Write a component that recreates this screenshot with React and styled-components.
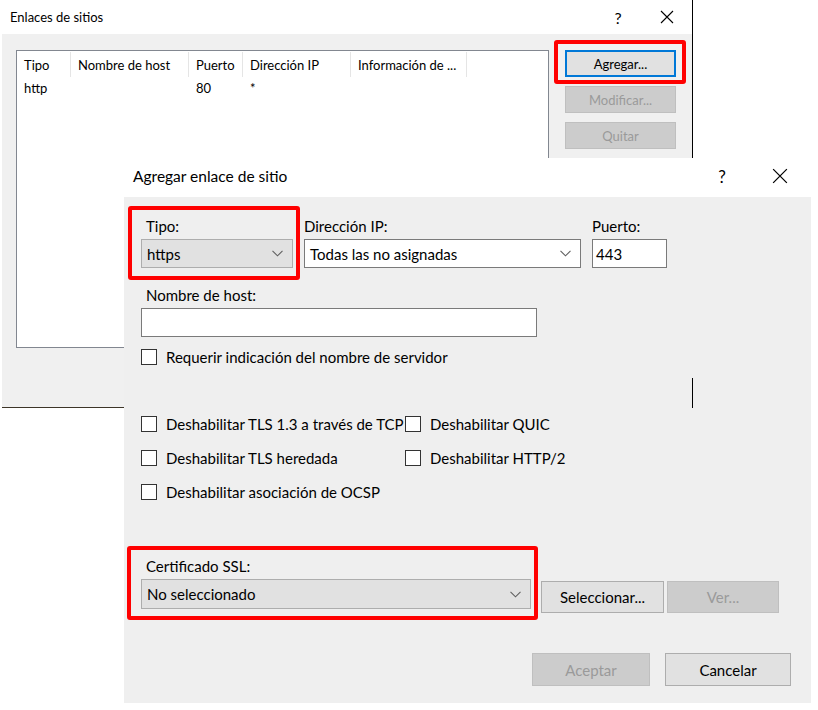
import React from 'react'
import styled, { createGlobalStyle, css } from 'styled-components'

const GlobalStyle = createGlobalStyle`
  html, body {
    margin: 0;
    padding: 0;
    background: #ffffff;
  }

  body {
    font-family: Lato, "Noto Sans", sans-serif;
    color: #000000;
  }
`

const CloseIcon = ({ size = 14 }) => (
  <svg width={size} height={size} viewBox="0 0 14 14">
    <path d="M1 1 L13 13 M13 1 L1 13" stroke="#000" strokeWidth="1.1" fill="none" />
  </svg>
)

const Chevron = () => (
  <svg width="11" height="7" viewBox="0 0 11 7">
    <path d="M0.5 0.8 L5.5 5.8 L10.5 0.8" stroke="#606060" strokeWidth="1.1" fill="none" />
  </svg>
)

const columns = [
  { title: 'Tipo', width: 54 },
  { title: 'Nombre de host', width: 118 },
  { title: 'Puerto', width: 54 },
  { title: 'Dirección IP', width: 108 },
  { title: 'Información de ...', width: 116 },
]

const rows = [['http', '', '80', '*', '']]

const App = () => {
  return (
    <Desktop>
      <GlobalStyle />

      <BackWindow>
        <TitleBar height={34}>
          <WindowTitle size={13} indent={8}>
            Enlaces de sitios
          </WindowTitle>
          <TitleControls gap={3} right={2}>
            <HelpButton size={16}>?</HelpButton>
            <CloseButton>
              <CloseIcon size={14} />
            </CloseButton>
          </TitleControls>
        </TitleBar>

        <BackBody>
          <ListView>
            <HeaderRow>
              {columns.map((c) => (
                <HeaderCell key={c.title} width={c.width}>
                  {c.title}
                </HeaderCell>
              ))}
            </HeaderRow>
            {rows.map((r, i) => (
              <DataRow key={i}>
                {r.map((value, j) => (
                  <DataCell key={j} width={columns[j].width}>
                    {value}
                  </DataCell>
                ))}
              </DataRow>
            ))}
          </ListView>

          <ButtonColumn>
            <Highlight top={10} right={10} bottom={7} left={11}>
              <WinButton width={111} height={27} size={13} focused>
                Agregar...
              </WinButton>
            </Highlight>
            <WinButton width={111} height={27} size={13} disabled>
              Modificar...
            </WinButton>
            <WinButton width={111} height={27} size={13} disabled>
              Quitar
            </WinButton>
            <WinButton width={111} height={27} size={13}>
              Examinar
            </WinButton>
          </ButtonColumn>
        </BackBody>
      </BackWindow>

      <FrontWindow>
        <TitleBar height={39} lift={3}>
          <WindowTitle size={15.5} indent={9}>
            Agregar enlace de sitio
          </WindowTitle>
          <TitleControls gap={12} right={8}>
            <HelpButton size={17}>?</HelpButton>
            <CloseButton>
              <CloseIcon size={16} />
            </CloseButton>
          </TitleControls>
        </TitleBar>

        <FrontBody>
          <FieldRow>
            <Highlight top={10} right={7} bottom={12} left={13}>
              <Field width={152}>
                <FieldLabel indent>Tipo:</FieldLabel>
                <ComboBox>
                  <span>https</span>
                  <Chevron />
                </ComboBox>
              </Field>
            </Highlight>
            <Field width={277}>
              <FieldLabel>Dirección IP:</FieldLabel>
              <ComboBox white>
                <span>Todas las no asignadas</span>
                <Chevron />
              </ComboBox>
            </Field>
            <Field width={75}>
              <FieldLabel>Puerto:</FieldLabel>
              <TextBox>443</TextBox>
            </Field>
          </FieldRow>

          <HostField width={396}>
            <FieldLabel indent>Nombre de host:</FieldLabel>
            <TextBox />
          </HostField>

          <SniRow>
            <CheckBox />
            <CheckText>Requerir indicación del nombre de servidor</CheckText>
          </SniRow>

          <CheckGrid>
            <CheckRow>
              <CheckBox />
              <CheckText>Deshabilitar TLS 1.3 a través de TCP</CheckText>
            </CheckRow>
            <CheckRow>
              <CheckBox />
              <CheckText>Deshabilitar QUIC</CheckText>
            </CheckRow>
            <CheckRow>
              <CheckBox />
              <CheckText>Deshabilitar TLS heredada</CheckText>
            </CheckRow>
            <CheckRow>
              <CheckBox />
              <CheckText>Deshabilitar HTTP/2</CheckText>
            </CheckRow>
            <CheckRow>
              <CheckBox />
              <CheckText>Deshabilitar asociación de OCSP</CheckText>
            </CheckRow>
          </CheckGrid>

          <CertRow>
            <Highlight top={10} right={7} bottom={11} left={14}>
              <Field width={390}>
                <FieldLabel indent>Certificado SSL:</FieldLabel>
                <ComboBox tall>
                  <span>No seleccionado</span>
                  <Chevron />
                </ComboBox>
              </Field>
            </Highlight>
            <CertButtons>
              <WinButton width={123} height={32} size={15}>
                Seleccionar...
              </WinButton>
              <WinButton width={112} height={32} size={15} disabled>
                Ver...
              </WinButton>
            </CertButtons>
          </CertRow>

          <Footer>
            <WinButton width={118} height={33} size={15} disabled>
              Aceptar
            </WinButton>
            <WinButton width={126} height={33} size={15}>
              Cancelar
            </WinButton>
          </Footer>
        </FrontBody>
      </FrontWindow>

      <SeamLine />
    </Desktop>
  )
}

const Desktop = styled.div`
  position: relative;
  width: 818px;
  height: 710px;
  overflow: hidden;
  background: #ffffff;
`

const BackWindow = styled.div`
  position: absolute;
  left: 2px;
  top: 0;
  width: 690px;
  height: 407px;
  display: flex;
  flex-direction: column;
  background: #f0f0f0;
  border-right: 1px solid #000000;
  border-bottom: 1px solid #3d3528;
`

const FrontWindow = styled.div`
  position: absolute;
  left: 124px;
  top: 158px;
  width: 687px;
  height: 545px;
  display: flex;
  flex-direction: column;
  background: #efefef;
`

const SeamLine = styled.div`
  position: absolute;
  left: 692px;
  top: 378px;
  width: 1px;
  height: 30px;
  background: #000000;
`

const TitleBar = styled.div`
  display: flex;
  align-items: center;
  flex: none;
  box-sizing: border-box;
  height: ${({ height }) => height}px;
  padding-bottom: ${({ lift }) => lift || 0}px;
  background: #ffffff;
`

const WindowTitle = styled.div`
  flex: 1;
  padding-left: ${({ indent }) => indent}px;
  font-size: ${({ size }) => size}px;
`

const TitleControls = styled.div`
  display: flex;
  align-items: center;
  gap: ${({ gap }) => gap}px;
  margin-right: ${({ right }) => right}px;
`

const HelpButton = styled.div`
  width: 46px;
  text-align: center;
  font-size: ${({ size }) => size}px;
`

const CloseButton = styled.div`
  width: 46px;
  display: flex;
  justify-content: center;
  align-items: center;
`

const BackBody = styled.div`
  display: flex;
  align-items: flex-start;
  gap: 16px;
  padding: 16px 0 0 14px;
`

const ListView = styled.div`
  width: 531px;
  height: 296px;
  background: #ffffff;
  border: 1px solid #828790;
  font-size: 13px;
`

const HeaderRow = styled.div`
  display: flex;
  height: 25px;
  margin-top: 1px;
`

const HeaderCell = styled.div`
  box-sizing: border-box;
  width: ${({ width }) => width}px;
  padding-left: 7px;
  display: flex;
  align-items: center;
  border-right: 1px solid #e5e5e5;
  white-space: nowrap;
`

const DataRow = styled.div`
  display: flex;
  height: 22px;
  align-items: center;
`

const DataCell = styled.div`
  box-sizing: border-box;
  width: ${({ width }) => width}px;
  padding-left: 7px;
`

const ButtonColumn = styled.div`
  display: flex;
  flex-direction: column;
  gap: 9px;
`

const Highlight = styled.div`
  position: relative;

  &::after {
    content: '';
    position: absolute;
    top: -${({ top }) => top}px;
    right: -${({ right }) => right}px;
    bottom: -${({ bottom }) => bottom}px;
    left: -${({ left }) => left}px;
    border: 4px solid #ff0000;
    border-radius: 3px;
    pointer-events: none;
  }
`

const WinButton = styled.div`
  box-sizing: border-box;
  width: ${({ width }) => width}px;
  height: ${({ height }) => height}px;
  display: flex;
  align-items: center;
  justify-content: center;
  font-size: ${({ size }) => size}px;
  background: #e1e1e1;
  border: 1px solid #adadad;
  color: #000000;

  ${({ focused }) =>
    focused &&
    css`
      border: 2px solid #0078d7;
    `}

  ${({ disabled }) =>
    disabled &&
    css`
      background: #cccccc;
      border-color: #bfbfbf;
      color: #9a9a9a;
    `}
`

const FrontBody = styled.div`
  display: flex;
  flex-direction: column;
  padding: 19px 20px 0 17px;
`

const FieldRow = styled.div`
  display: flex;
  gap: 11px;
`

const Field = styled.div`
  display: flex;
  flex-direction: column;
  gap: 3px;
  width: ${({ width }) => width}px;
`

const HostField = styled(Field)`
  margin-top: 17px;
`

const FieldLabel = styled.div`
  height: 20px;
  line-height: 20px;
  font-size: 15px;
  padding-left: ${({ indent }) => (indent ? 5 : 0)}px;
`

const ComboBox = styled.div`
  box-sizing: border-box;
  height: ${({ tall }) => (tall ? 30 : 29)}px;
  display: flex;
  align-items: center;
  justify-content: space-between;
  padding: 0 9px 0 5px;
  font-size: 15px;
  background: ${({ white }) => (white ? '#ffffff' : '#e1e1e1')};
  border: 1px solid ${({ white }) => (white ? '#7a7a7a' : '#adadad')};
`

const TextBox = styled.div`
  box-sizing: border-box;
  height: 29px;
  display: flex;
  align-items: center;
  padding: 0 3px;
  font-size: 15px;
  background: #ffffff;
  border: 1px solid #7a7a7a;
`

const CheckRow = styled.div`
  display: flex;
  align-items: center;
  height: 20px;
  white-space: nowrap;
`

const SniRow = styled(CheckRow)`
  margin-top: 10px;
`

const CheckBox = styled.div`
  box-sizing: border-box;
  flex: none;
  width: 16px;
  height: 16px;
  margin-right: 9px;
  background: #ffffff;
  border: 1px solid #333333;
`

const CheckText = styled.span`
  font-size: 15px;
`

const CheckGrid = styled.div`
  display: grid;
  grid-template-columns: 264px auto;
  row-gap: 14px;
  margin-top: 47px;
`

const CertRow = styled.div`
  display: flex;
  align-items: flex-start;
  margin-top: 54px;
`

const CertButtons = styled.div`
  display: flex;
  gap: 3px;
  margin: 25px 0 0 10px;
`

const Footer = styled.div`
  display: flex;
  justify-content: flex-end;
  gap: 15px;
  margin-top: 40px;
`

export default App
